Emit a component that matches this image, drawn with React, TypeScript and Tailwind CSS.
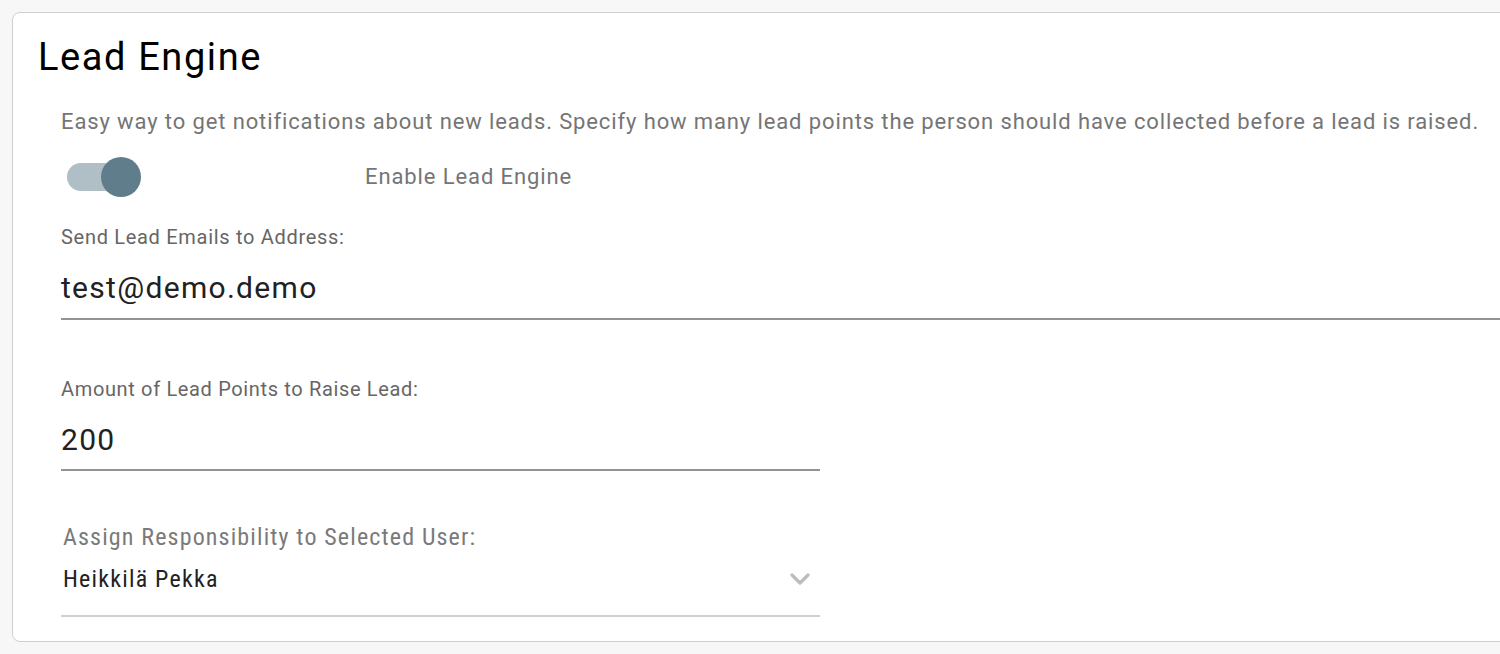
import { ChevronDown } from "lucide-react";

const font = { fontFamily: "Roboto, 'Noto Sans', sans-serif" };
const narrow = { fontFamily: "'Roboto Condensed', 'Liberation Sans Narrow', Roboto, sans-serif" };

const Toggle = ({ on = true }: { on?: boolean }) => (
  <div className="relative h-[40px] w-[74px] ml-[6px]">
    <div className="absolute left-0 top-[6px] h-[28px] w-[62px] rounded-full bg-[#b0bec5]" />
    <div
      className={`absolute top-0 h-[40px] w-[40px] rounded-full bg-[#607d8b] ${on ? "left-[34px]" : "left-0"}`}
    />
  </div>
);

export default function App() {
  return (
    <div className="min-h-screen bg-[#f7f7f7] pt-[12px] pl-[12px] overflow-hidden" style={font}>
      <div className="w-[1560px] rounded-lg border border-[#cfcfcf] bg-white pt-[22px] pb-[24px] pl-[25px]">
        <h1 className="text-[38px] leading-[44px] tracking-[1.6px] text-black">Lead Engine</h1>
        <div className="pl-[23px]">
          <p className="mt-[29px] text-[22px] leading-[28px] tracking-[0.88px] text-[#757575]">
            Easy way to get notifications about new leads. Specify how many lead points the person should have collected before a lead is raised.
          </p>
          <div className="mt-[21px] flex items-center">
            <div className="w-[304px]">
              <Toggle />
            </div>
            <span className="text-[22px] leading-[28px] tracking-[0.9px] text-[#757575]">Enable Lead Engine</span>
          </div>

          <label className="mt-[28px] block text-[20px] leading-[24px] tracking-[0.7px] text-[#666]">
            Send Lead Emails to Address:
          </label>
          <div className="mt-[19px] border-b-2 border-[#939393] pb-[10px] text-[30px] leading-[40px] tracking-[1.3px] text-[#212121]">
            test@demo.demo
          </div>

          <label className="mt-[57px] block text-[20px] leading-[24px] tracking-[0.65px] text-[#666]">
            Amount of Lead Points to Raise Lead:
          </label>
          <div className="mt-[19px] w-[759px] border-b-2 border-[#939393] pb-[9px] text-[30px] leading-[40px] tracking-[1.3px] text-[#212121]">
            200
          </div>

          <div className="mt-[52px] w-[759px]">
            <div className="pl-[2px] text-[24px] leading-[28px] tracking-[1.15px] text-[#7a7a7a]" style={narrow}>
              Assign Responsibility to Selected User:
            </div>
            <div className="mt-[12px] flex items-center justify-between border-b-2 border-[#cfcfcf] pb-[20px] pl-[2px] pr-[4px]">
              <span className="text-[24px] leading-[28px] tracking-[1.2px] text-[#222]" style={narrow}>
                Heikkilä Pekka
              </span>
              <ChevronDown className="h-[32px] w-[32px] text-[#bdbdbd]" strokeWidth={2.5} />
            </div>
          </div>
        </div>
      </div>
    </div>
  );
}
